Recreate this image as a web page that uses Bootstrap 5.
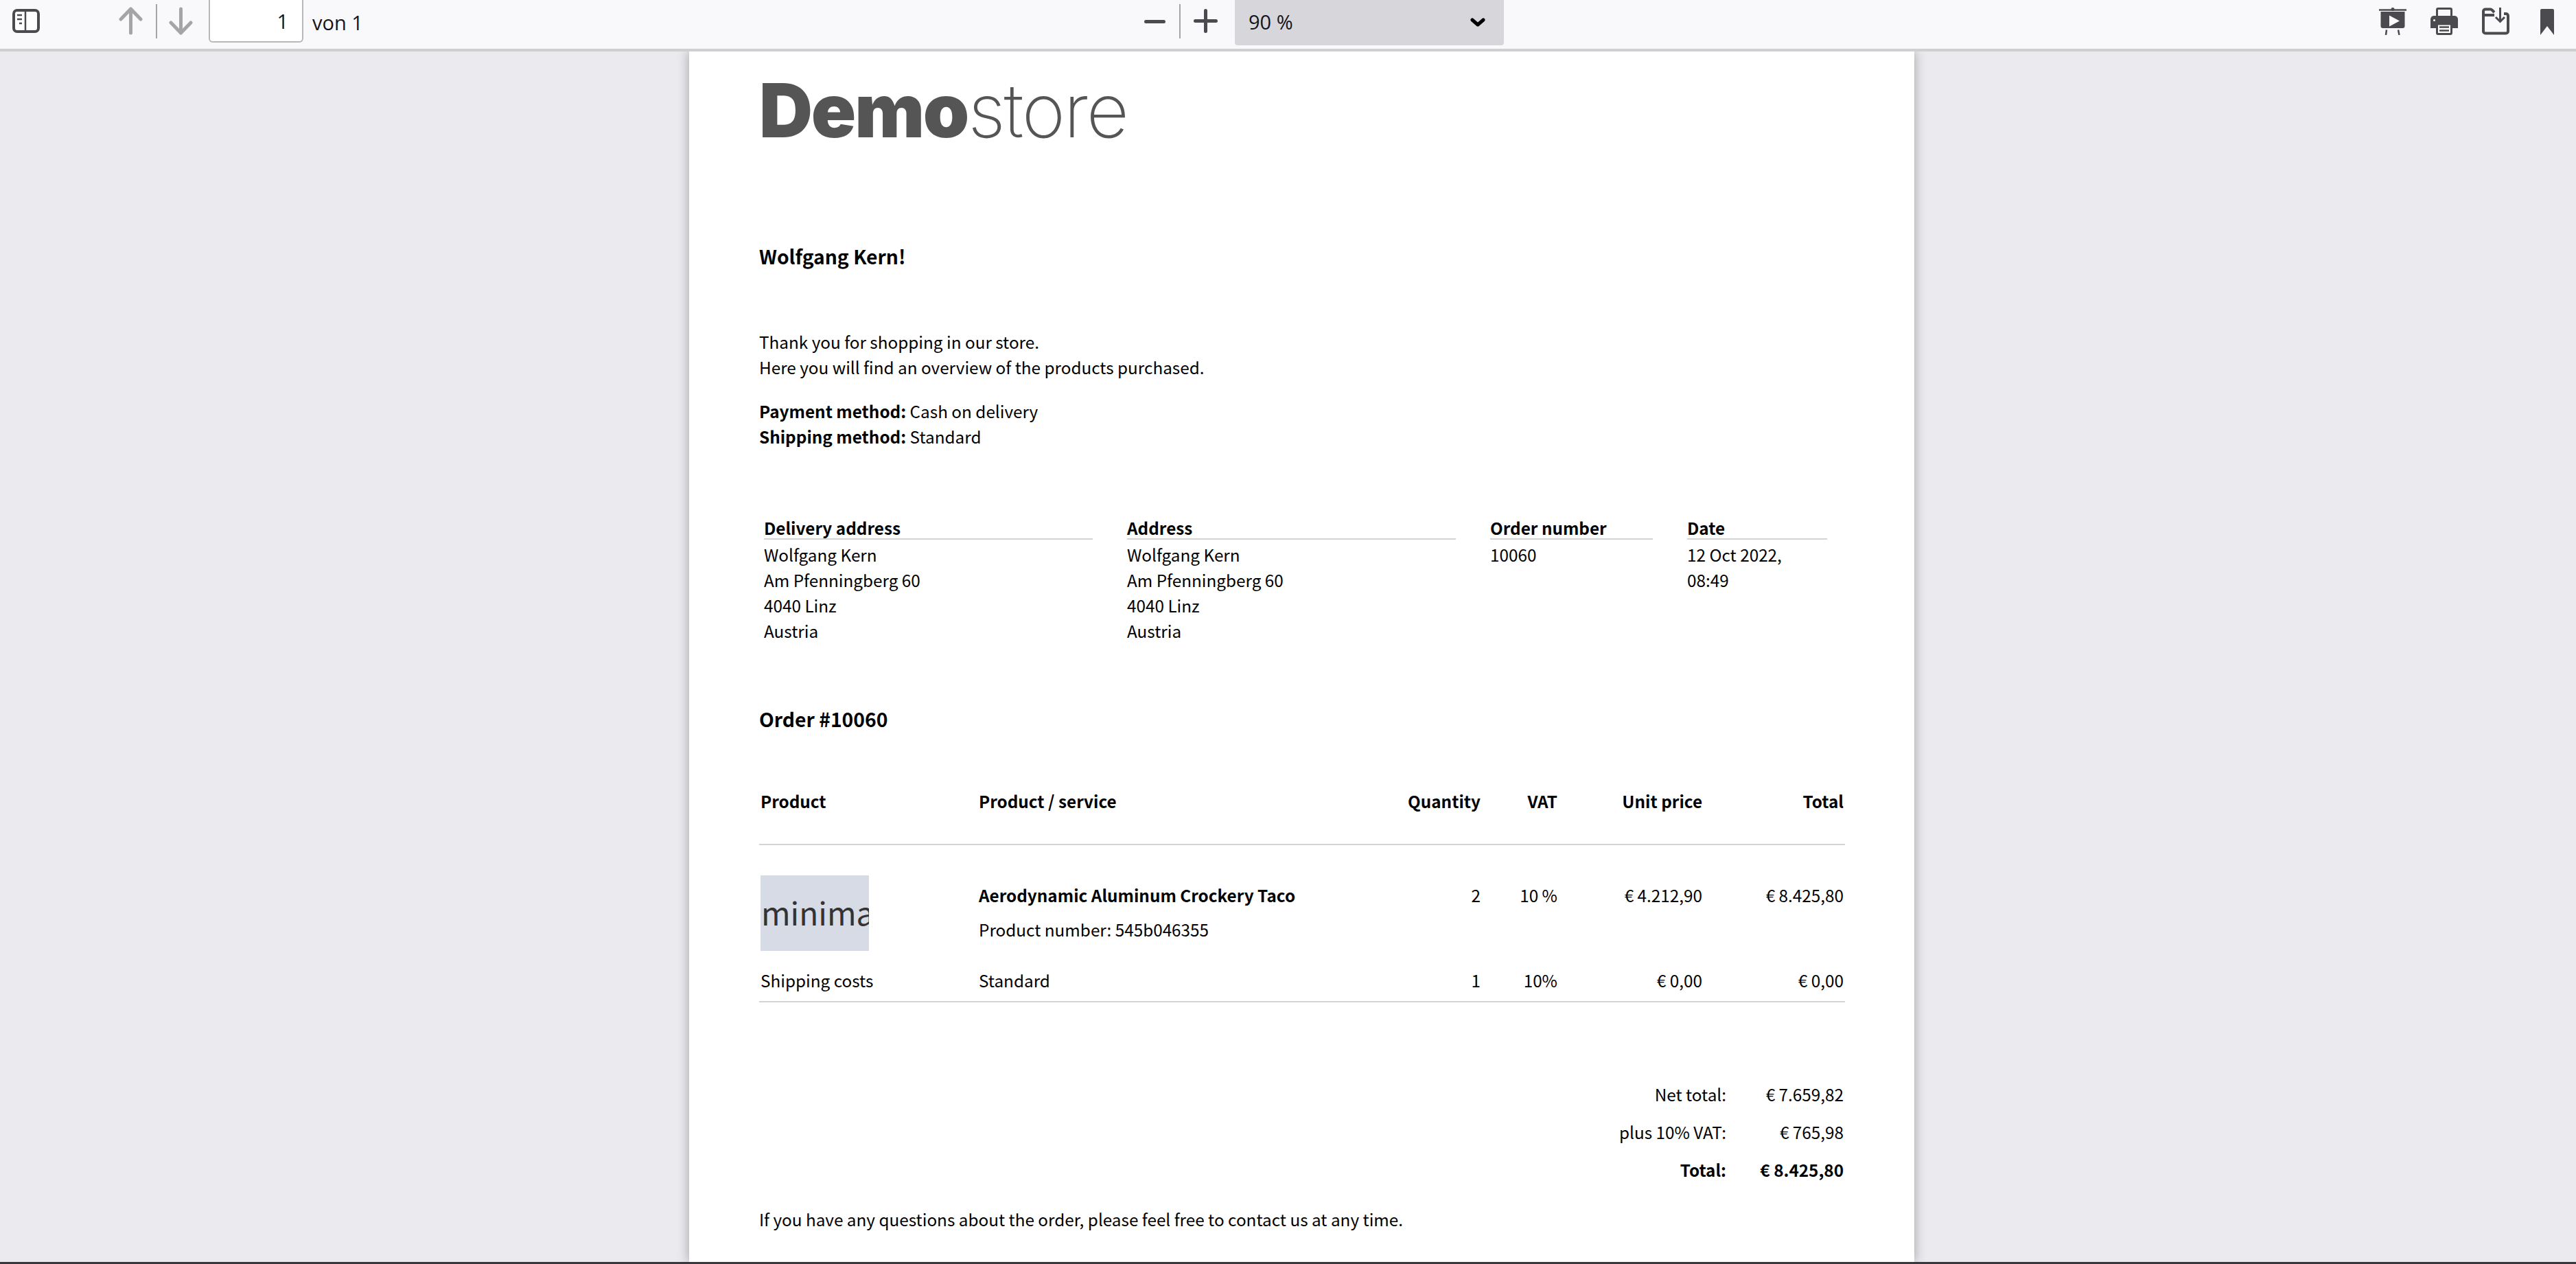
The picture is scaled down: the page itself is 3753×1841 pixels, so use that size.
<!DOCTYPE html>
<html lang="en">
<head>
  <meta charset="UTF-8">
  <meta name="viewport" content="width=device-width, initial-scale=1.0">
  <title>Order 10060</title>
  <link href="https://cdn.jsdelivr.net/npm/bootstrap@5.3.1/dist/css/bootstrap.min.css" rel="stylesheet">
  <style>
    html, body { height: 100%; }
    body {
      background: #ebebef;
      overflow: hidden;
      font-family: "Noto Sans CJK SC", "Liberation Sans", sans-serif;
      color: #000;
    }
    .viewer { height: 100vh; }

    /* toolbar */
    .tb {
      height: 75px;
      flex: 0 0 75px;
      background: #f9f9fb;
      border-bottom: 4px solid #cfcfd1;
      font-family: "Open Sans", "Liberation Sans", sans-serif;
      font-size: 29px;
      color: #15141a;
    }
    .tb svg { display: block; flex: none; }
    .tb-left { width: 1667px; padding-left: 18px; }
    .tb-mid { width: 1799px; }
    .ic-up { margin-left: 115px; }
    .ic-down { margin-left: 17px; }
    .tb-sep { width: 2px; height: 50px; background: #a5a5a8; margin-top: 6px; flex: none; }
    .sep-nav { margin-left: 19px; }
    .sep-zoom { margin-left: 20px; }
    .ic-plus { margin-left: 19px; }
    .page-box {
      width: 138px;
      height: 62px;
      margin-left: 23px;
      background: #fff;
      border: 2px solid #b8b8ba;
      border-top: 0;
      border-radius: 0 0 6px 6px;
      text-align: right;
      padding-right: 20px;
      line-height: 62px;
    }
    .page-of { margin-left: 13px; line-height: 66px; }
    .zoom-pick {
      width: 392px;
      height: 66px;
      margin-left: 25px;
      background: #d7d7db;
      border-radius: 0 0 4px 4px;
      padding: 0 27px 0 20px;
      line-height: 64px;
    }
    .ic-2 { margin-left: 35px; }
    .ic-3 { margin-left: 45px; }

    /* sheet */
    .sheet-area { min-height: 0; padding-left: 40px; }
    .sheet {
      width: 1785px;
      background: #fff;
      box-shadow: 0 0 16px rgba(60, 60, 70, .45);
      padding: 0 101px 0 102px;
      font-size: 24.3px;
      line-height: 37px;
      overflow: hidden;
    }
    .bottom-rule { height: 3px; flex: 0 0 3px; background: #38383d; }
    .logo-txt {
      font-family: Inter, "Liberation Sans", sans-serif;
      font-size: 108px;
      line-height: 79px;
      height: 79px;
      margin-top: 46px;
      color: #555;
      letter-spacing: -2.2px;
      white-space: nowrap;
    }
    .logo-txt b { font-weight: 900; }
    .logo-txt span { font-weight: 250; }
    .hello { font-size: 28.3px; font-weight: 700; line-height: 40px; margin-top: 153px; }
    .intro { margin-top: 86px; }
    .pay { margin-top: 27px; }

    .addr-tbl { margin-top: 100px; margin-left: 7px; border-collapse: collapse; table-layout: fixed; width: 1549px; }
    .addr-tbl th, .addr-tbl td { padding: 0; vertical-align: top; }
    .addr-tbl th > div { border-bottom: 2px solid #d4d4d4; line-height: 30px; height: 32px; }
    .addr-tbl tr > * > div { margin-right: 50px; }
    .addr-tbl td > div { padding-top: 3px; }
    .order-title { font-size: 28.3px; font-weight: 700; line-height: 40px; margin-top: 90px; }

    .prod-tbl { width: 100%; border-collapse: collapse; table-layout: fixed; margin-top: 76px; }
    .prod-tbl th, .prod-tbl td { padding: 0 2px; vertical-align: top; }
    .prod-tbl thead th { height: 87px; padding-top: 5px; border-bottom: 2px solid #d4d4d4; }
    .prod-row td { padding-top: 54px; }
    .prod-row td.thumb-cell { padding-top: 44px; }
    .thumb {
      width: 158px;
      height: 110px;
      background: #d6dbe5;
      color: #333;
      font-size: 46px;
      line-height: 106px;
      overflow: hidden;
      white-space: nowrap;
      padding-left: 1px;
    }
    .prod-no { margin-top: 13px; }
    .ship-row td { padding-top: 24px; padding-bottom: 12px; border-bottom: 2px solid #d4d4d4; }

    .sum-tbl { margin: 115px 0 0 auto; border-collapse: collapse; }
    .sum-tbl td { padding: 0 2px 18px 0; text-align: right; }
    .sum-tbl td:first-child { padding-right: 0; }
    .sum-tbl td:last-child { width: 173px; }
    .closing { margin-top: 17px; }
  </style>
</head>
<body>
  <div class="viewer d-flex flex-column">
    <div class="tb d-flex align-items-start">
      <div class="tb-left d-flex align-items-start">
        <svg style="margin-top:13px" width="40" height="35" viewBox="0 0 40 35">
          <rect x="2" y="2" width="36" height="31" rx="5" fill="#fff" stroke="#4a4a4f" stroke-width="4"/>
          <path d="M19 2v31" stroke="#4a4a4f" stroke-width="2.5"/>
          <path d="M7 9h7M7 15h7M10 21h4" stroke="#4a4a4f" stroke-width="2.5"/>
        </svg>
        <svg class="ic-up" style="margin-top:10px" width="35" height="41" viewBox="0 0 35 41" fill="none" stroke="#a5a5a8" stroke-width="5" stroke-linecap="round" stroke-linejoin="round">
          <path d="M17.5 3v35M3 18 17.5 3 32 18"/>
        </svg>
        <div class="tb-sep sep-nav"></div>
        <svg class="ic-down" style="margin-top:10px" width="35" height="41" viewBox="0 0 35 41" fill="none" stroke="#a5a5a8" stroke-width="5" stroke-linecap="round" stroke-linejoin="round">
          <path d="M17.5 3v35M3 23l14.5 15L32 23"/>
        </svg>
        <div class="page-box">1</div>
        <div class="page-of">von 1</div>
      </div>
      <div class="tb-mid d-flex align-items-start">
        <svg style="margin-top:29px" width="31" height="5" viewBox="0 0 31 5"><path d="M2.500 2.500h26" stroke="#4a4a4f" stroke-width="5" stroke-linecap="round"/></svg>
        <div class="tb-sep sep-zoom"></div>
        <svg class="ic-plus" style="margin-top:13px" width="35" height="35" viewBox="0 0 35 35"><path d="M2.500 17.500h30M17.500 2.500v30" stroke="#4a4a4f" stroke-width="5" stroke-linecap="round"/></svg>
        <div class="zoom-pick d-flex justify-content-between">
          <span>90 %</span>
          <svg style="margin-top:26px" width="22" height="13" viewBox="0 0 22 13"><path d="M3 3l8 7 8-7" fill="none" stroke="#000" stroke-width="5" stroke-linecap="round" stroke-linejoin="round"/></svg>
        </div>
      </div>
      <div class="d-flex align-items-start">
        <svg style="margin-top:11px" width="40" height="40" viewBox="0 0 40 40">
          <path d="M0 3.500h40" stroke="#4a4a4f" stroke-width="2.500"/>
          <circle cx="20" cy="2.500" r="2.500" fill="#4a4a4f"/>
          <path d="M2.500 6h35v21a3 3 0 0 1-3 3h-29a3 3 0 0 1-3-3z" fill="#4a4a4f"/>
          <path d="M15 11.500 30 19.500 15 27.500z" fill="#fff"/>
          <path d="M11 32.500 10 40M28 32.500 29.500 40" stroke="#4a4a4f" stroke-width="2.500"/>
        </svg>
        <svg class="ic-2" style="margin-top:11px" width="40" height="40" viewBox="0 0 40 40">
          <path d="M9.500 13V3a1.500 1.500 0 0 1 1.500-1.500h18a1.500 1.500 0 0 1 1.500 1.500v10" fill="none" stroke="#4a4a4f" stroke-width="3"/>
          <path d="M5 12h30a5 5 0 0 1 5 5v13H0V17a5 5 0 0 1 5-5z" fill="#4a4a4f"/>
          <rect x="9.500" y="24" width="21" height="14.500" rx="1.500" fill="#fff" stroke="#4a4a4f" stroke-width="3"/>
          <path d="M13 28.500h14M13 33.500h14" stroke="#4a4a4f" stroke-width="2.500"/>
          <circle cx="5.500" cy="18.500" r="1.500" fill="#fff"/>
        </svg>
        <svg class="ic-2" style="margin-top:11px" width="40" height="40" viewBox="0 0 40 40">
          <path d="M18 7 14.500 3.500a3 3 0 0 0-2-1H5a3 3 0 0 0-3 3v29a3 3 0 0 0 3 3h30a3 3 0 0 0 3-3V12a3 3 0 0 0-3-3h-3" fill="none" stroke="#4a4a4f" stroke-width="4"/>
          <path d="M3 11h15" stroke="#4a4a4f" stroke-width="4"/>
          <path d="M26.500 0v20M20 14l6.500 6.500L33 14" fill="none" stroke="#4a4a4f" stroke-width="3"/>
        </svg>
        <svg class="ic-3" style="margin-top:13px" width="20" height="38" viewBox="0 0 20 38">
          <path d="M2 0h16a2 2 0 0 1 2 2v36L10 25 0 38V2a2 2 0 0 1 2-2z" fill="#4a4a4f"/>
        </svg>
      </div>
    </div>

    <div class="sheet-area flex-grow-1 d-flex justify-content-center overflow-hidden">
      <div class="sheet">
        <div class="logo-txt"><b>Demo</b><span>store</span></div>
        <div class="hello">Wolfgang Kern!</div>
        <div class="intro">Thank you for shopping in our store.<br>Here you will find an overview of the products purchased.</div>
        <div class="pay"><strong>Payment method:</strong> Cash on delivery<br><strong>Shipping method:</strong> Standard</div>

        <table class="addr-tbl">
          <colgroup><col style="width:529px"><col style="width:529px"><col style="width:287px"><col style="width:204px"></colgroup>
          <thead>
            <tr><th><div>Delivery address</div></th><th><div>Address</div></th><th><div>Order number</div></th><th><div class="me-0">Date</div></th></tr>
          </thead>
          <tbody>
            <tr>
              <td><div>Wolfgang Kern<br>Am Pfenningberg 60<br>4040 Linz<br>Austria</div></td>
              <td><div>Wolfgang Kern<br>Am Pfenningberg 60<br>4040 Linz<br>Austria</div></td>
              <td><div>10060</div></td>
              <td><div class="me-0">12 Oct 2022,<br>08:49</div></td>
            </tr>
          </tbody>
        </table>

        <div class="order-title">Order #10060</div>

        <table class="prod-tbl">
          <colgroup><col style="width:318px"><col style="width:563px"><col style="width:172px"><col style="width:112px"><col style="width:211px"><col style="width:206px"></colgroup>
          <thead>
            <tr><th>Product</th><th>Product / service</th><th class="text-end">Quantity</th><th class="text-end">VAT</th><th class="text-end">Unit price</th><th class="text-end">Total</th></tr>
          </thead>
          <tbody>
            <tr class="prod-row">
              <td class="thumb-cell"><div class="thumb">minima</div></td>
              <td><strong>Aerodynamic Aluminum Crockery Taco</strong><div class="prod-no">Product number: 545b046355</div></td>
              <td class="text-end">2</td>
              <td class="text-end">10 %</td>
              <td class="text-end">€ 4.212,90</td>
              <td class="text-end">€ 8.425,80</td>
            </tr>
            <tr class="ship-row">
              <td>Shipping costs</td>
              <td>Standard</td>
              <td class="text-end">1</td>
              <td class="text-end">10%</td>
              <td class="text-end">€ 0,00</td>
              <td class="text-end">€ 0,00</td>
            </tr>
          </tbody>
        </table>

        <table class="sum-tbl">
          <tr><td>Net total:</td><td>€ 7.659,82</td></tr>
          <tr><td>plus 10% VAT:</td><td>€ 765,98</td></tr>
          <tr class="fw-bold"><td>Total:</td><td>€ 8.425,80</td></tr>
        </table>

        <div class="closing">If you have any questions about the order, please feel free to contact us at any time.</div>
      </div>
    </div>
    <div class="bottom-rule"></div>
  </div>

  <script src="https://cdn.jsdelivr.net/npm/bootstrap@5.3.1/dist/js/bootstrap.bundle.min.js"></script>
</body>
</html>
